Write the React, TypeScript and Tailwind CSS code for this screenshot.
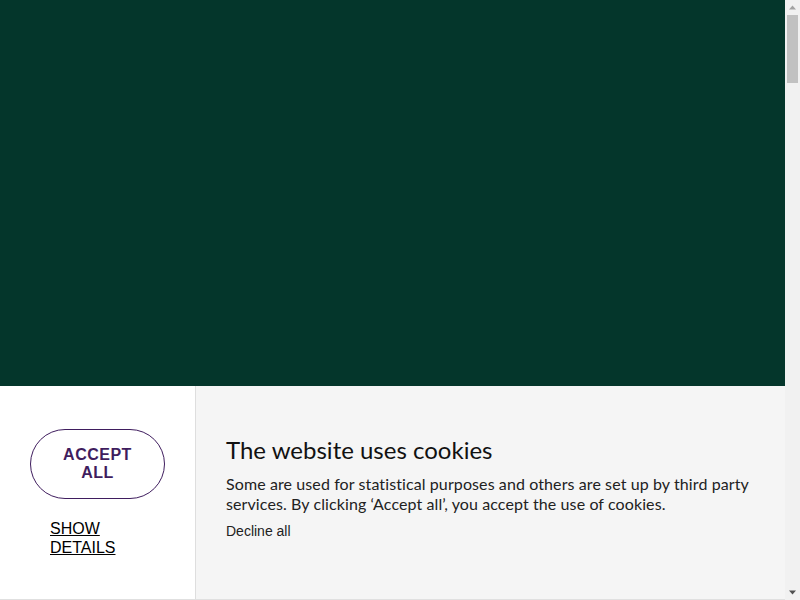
function Scrollbar() {
  return (
    <div className="fixed right-0 top-0 bottom-0 flex w-[15px] flex-col items-center bg-[#f1f1f1]">
      <svg width="15" height="15" viewBox="0 0 15 15" className="shrink-0">
        <path d="M4 9.5 L7.5 5.5 L11 9.5 Z" fill="#a3a3a3" />
      </svg>
      <div className="h-[68px] w-[11px] shrink-0 bg-[#c1c1c1]" />
      <div className="flex-1" />
      <svg width="15" height="15" viewBox="0 0 15 15" className="shrink-0">
        <path d="M4 5.5 L7.5 9.5 L11 5.5 Z" fill="#505050" />
      </svg>
    </div>
  );
}

export default function App() {
  return (
    <div className="min-h-[5100px] bg-[#04362b]">
      <div className="fixed bottom-0 left-0 right-[15px] flex h-[214px] border-b border-[#e0e0e0] bg-white">
        <div className="flex w-[196px] shrink-0 flex-col items-start border-r border-[#dedede] pl-[30px] pt-[43px]">
          <button className="h-[70px] w-[135px] rounded-full border border-[#3f1d5e] px-6 text-[16px] font-bold uppercase leading-[18px] tracking-[0.5px] text-[#3f1d5e] [font-family:'Liberation_Sans',Arial,sans-serif]">
            Accept all
          </button>
          <a className="mt-[20px] ml-[20px] text-[16px] uppercase leading-[19px] text-black underline [font-family:'Liberation_Sans',Arial,sans-serif]">
            Show
            <br />
            details
          </a>
        </div>
        <div className="flex-1 bg-[#f5f5f5] pl-[30px] pr-[24px] pt-[49px]">
          <h2 className="text-[24px] leading-[30px] text-[#111] [font-family:Lato,sans-serif]">
            The website uses cookies
          </h2>
          <p className="mt-[9px] text-[16px] leading-[19.5px] tracking-[0.1px] text-[#222] [font-family:Lato,sans-serif]">
            Some are used for statistical purposes and others are set up by third party services. By clicking ‘Accept all’, you accept the use of cookies.
          </p>
          <button className="mt-[8px] text-[14px] leading-[20px] text-[#222] [font-family:'Liberation_Sans',Arial,sans-serif]">
            Decline all
          </button>
        </div>
      </div>
      <Scrollbar />
    </div>
  );
}
